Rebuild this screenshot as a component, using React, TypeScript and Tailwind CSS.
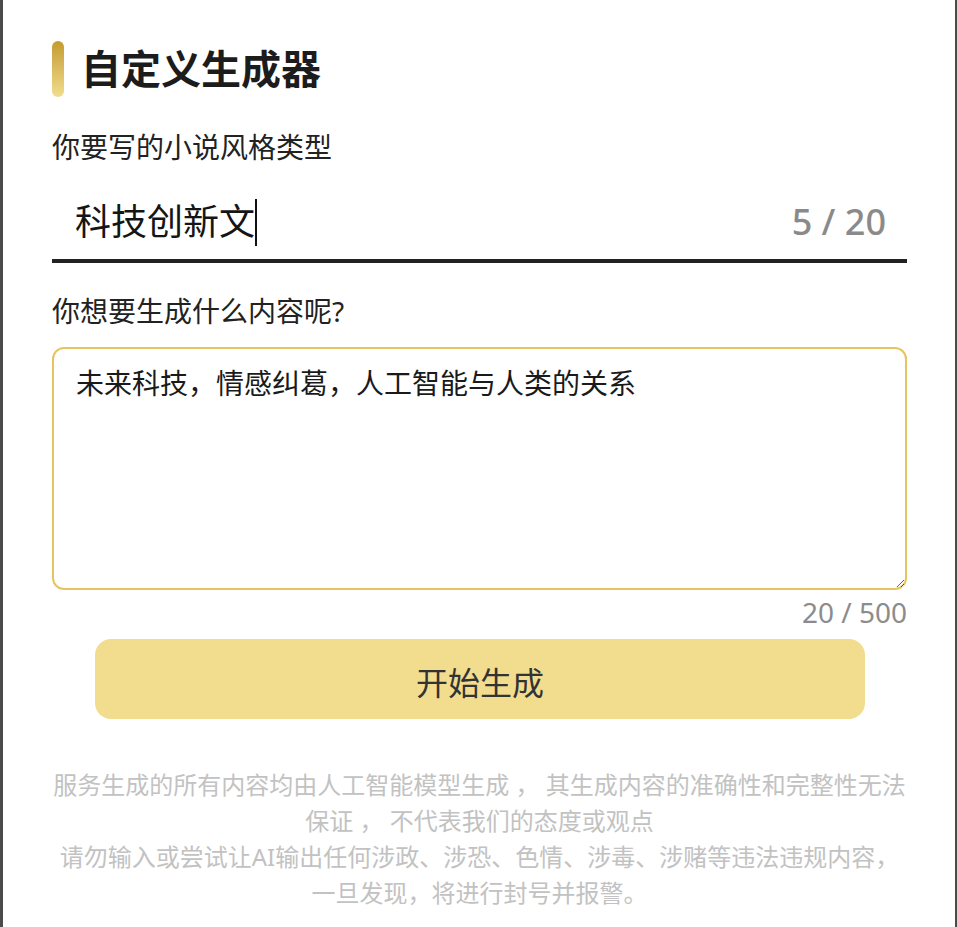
import React from 'react';

const disclaimer = [
  '服务生成的所有内容均由人工智能模型生成 ，  其生成内容的准确性和完整性无法保证 ，  不代表我们的态度或观点',
  '请勿输入或尝试让AI输出任何涉政、涉恐、色情、涉毒、涉赌等违法违规内容，一旦发现，将进行封号并报警。',
];

const App = () => {
  const style = '科技创新文';
  const content = '未来科技，情感纠葛，人工智能与人类的关系';

  return (
    <div
      className="min-h-[927px] bg-[#4b4b4b] pl-[3px] pr-[2px]"
      style={{ fontFamily: '"Noto Sans", "Noto Sans CJK SC", sans-serif' }}
    >
      <div className="min-h-[927px] bg-white pl-[49px] pr-[48px] pt-[41px]">
        {/* title */}
        <div className="flex items-center gap-[17px]">
          <div className="h-[56px] w-[12px] rounded-full bg-gradient-to-b from-[#c49b2e] to-[#f2dd8c]" />
          <h1 className="text-[40px] font-semibold leading-[56px] text-[#1c1c1c]">自定义生成器</h1>
        </div>

        <p className="mt-[30px] text-[28px] leading-[40px] text-[#222]">你要写的小说风格类型</p>

        <div className="flex h-[96px] items-center border-b-4 border-[#222] pl-[23px] pr-[21px] pt-[18px]">
          <div className="flex flex-1 items-center">
            <span className="text-[36px] leading-[48px] text-[#151515]">{style}</span>
            <span className="h-[47px] w-[2px] bg-[#111]" />
          </div>
          <span className="text-[36px] font-medium leading-[48px] text-[#8a8a8a]">{style.length} / 20</span>
        </div>

        <p className="mt-[28px] text-[28px] leading-[40px] text-[#222]">你想要生成什么内容呢?</p>

        <textarea
          readOnly
          defaultValue={content}
          className="mt-[16px] block h-[243px] w-full rounded-[12px] border-2 border-[#e6c461] px-[22px] pt-[14px] text-[28px] leading-[40px] text-[#1a1a1a] outline-none"
        />
        <div className="mt-[2px] text-right text-[28px] leading-[40px] text-[#8c8c8c]">
          {content.length} / 500
        </div>

        <button className="mx-[43px] mt-[7px] flex h-[80px] w-[770px] items-center justify-center rounded-[16px] bg-[#f2dd8f] pt-[8px] text-[32px] text-[#333]">
          开始生成
        </button>

        <div className="mt-[48px] text-center text-[24px] leading-[36px] text-[#c2c2c2]">
          {disclaimer.map((line, i) => (
            <p key={i}>{line}</p>
          ))}
        </div>
      </div>
    </div>
  );
};

export default App;
